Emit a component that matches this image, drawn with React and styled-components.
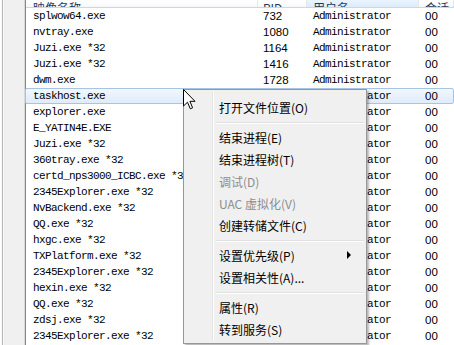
import React from 'react';
import styled, { createGlobalStyle } from 'styled-components';

const GlobalStyle = createGlobalStyle`
  html, body {
    margin: 0;
    padding: 0;
    background: #ffffff;
    overflow: hidden;
  }
`;

const Window = styled.div`
  position: relative;
  width: 454px;
  height: 345px;
  display: flex;
  overflow: hidden;
  background: #ffffff;
`;

const Frame = styled.div`
  width: 22px;
  flex: none;
  margin-left: 1px;
  background: #f0f0f0;
  border-left: 1px solid #f7f7f7;
  border-right: 1px solid #d9d9d9;
  box-shadow: inset 1px 0 0 #b9b9b9, inset 2px 0 0 #f7f7f7;
`;

const FrameEdge = styled.div`
  width: 1px;
  flex: none;
  background: #828790;
`;

const ListView = styled.div`
  flex: 1;
  display: flex;
  flex-direction: column;
  min-width: 0;
`;

const cols = '232px 49px 112px 1fr';

const Header = styled.div`
  display: grid;
  grid-template-columns: ${cols};
  height: 7px;
  border-bottom: 1px solid #d5d5d5;
  overflow: hidden;
  flex: none;
`;

const HeadCell = styled.div`
  display: flex;
  align-items: flex-end;
  padding-left: ${p => p.$pad || 7}px;
  border-right: 1px solid #e3e8ee;
  background: ${p => (p.$sorted ? 'linear-gradient(#eaf4fd, #dcecfb)' : 'linear-gradient(#ffffff, #f7f8fa)')};
  font-family: "Noto Sans CJK SC", "Liberation Sans", sans-serif;
  font-size: 12px;
  line-height: 13px;
  color: #1e395b;
  white-space: nowrap;
  overflow: hidden;
  & > span {
    margin-bottom: -7px;
  }
`;

const Rows = styled.div`
  display: flex;
  flex-direction: column;
`;

const Row = styled.div`
  display: grid;
  grid-template-columns: ${cols};
  height: 16px;
  box-sizing: border-box;
  align-items: center;
  border: 1px solid ${p => (p.$selected ? '#a8c4e4' : 'transparent')};
  border-radius: 2px;
  background: ${p => (p.$selected ? 'linear-gradient(#f1f7fe, #dfecfb)' : 'transparent')};
  margin-left: -1px;
`;

const MonoCell = styled.div`
  padding-left: ${p => p.$pad || 6}px;
  font-family: "Liberation Mono", "DejaVu Sans Mono", monospace;
  font-size: 11px;
  letter-spacing: -0.6px;
  color: #000;
  white-space: nowrap;
  overflow: hidden;
`;

const NumCell = styled.div`
  padding-left: ${p => p.$pad || 5}px;
  font-family: "Liberation Sans", Arial, sans-serif;
  font-size: 11.5px;
  color: #000;
  white-space: nowrap;
`;

const Menu = styled.div`
  position: absolute;
  left: 183px;
  top: 89px;
  width: 178px;
  padding: 6px 2px 3px 2px;
  border: 1px solid #979797;
  background: #f0f0f0;
  box-shadow: 2px 2px 2px rgba(0, 0, 0, 0.28);
  display: flex;
  flex-direction: column;
  &::before {
    content: '';
    position: absolute;
    top: 2px;
    bottom: 2px;
    left: 28px;
    width: 1px;
    background: #e2e3e3;
    box-shadow: 1px 0 0 #ffffff;
  }
`;

const Item = styled.div`
  position: relative;
  height: 22px;
  display: flex;
  align-items: center;
  padding-left: 33px;
  font-family: "Noto Sans CJK SC", "Liberation Sans", sans-serif;
  font-size: 12px;
  color: ${p => (p.$disabled ? '#8d8d8d' : '#000')};
`;

const Arrow = styled.span`
  position: absolute;
  right: 13px;
  top: 7px;
  width: 0;
  height: 0;
  border-top: 4px solid transparent;
  border-bottom: 4px solid transparent;
  border-left: 4px solid #000;
`;

const Separator = styled.div`
  height: 8px;
  display: flex;
  align-items: center;
  padding-left: 30px;
  &::after {
    content: '';
    flex: 1;
    height: 1px;
    background: #e0e0e0;
    box-shadow: 0 1px 0 #ffffff;
  }
`;

const Cursor = styled.svg`
  position: absolute;
  left: 183px;
  top: 89px;
`;

const processes = [
  ['splwow64.exe', '732'],
  ['nvtray.exe', '1080'],
  ['Juzi.exe *32', '1164'],
  ['Juzi.exe *32', '1416'],
  ['dwm.exe', '1728'],
  ['taskhost.exe', '1784', true],
  ['explorer.exe', '1812'],
  ['E_YATIN4E.EXE', '1904'],
  ['Juzi.exe *32', '2000'],
  ['360tray.exe *32', '2084'],
  ['certd_nps3000_ICBC.exe *32', '2124'],
  ['2345Explorer.exe *32', '2200'],
  ['NvBackend.exe *32', '2356'],
  ['QQ.exe *32', '2420'],
  ['hxgc.exe *32', '2496'],
  ['TXPlatform.exe *32', '2572'],
  ['2345Explorer.exe *32', '2640'],
  ['hexin.exe *32', '2712'],
  ['QQ.exe *32', '2788'],
  ['zdsj.exe *32', '2860'],
  ['2345Explorer.exe *32', '2932'],
];

const menu = [
  { label: '打开文件位置(O)' },
  { sep: true },
  { label: '结束进程(E)' },
  { label: '结束进程树(T)' },
  { label: '调试(D)', disabled: true },
  { label: 'UAC 虚拟化(V)', disabled: true },
  { label: '创建转储文件(C)' },
  { sep: true },
  { label: '设置优先级(P)', sub: true },
  { label: '设置相关性(A)...' },
  { sep: true },
  { label: '属性(R)' },
  { label: '转到服务(S)' },
];

const App = () => {
  return (
    <Window>
      <GlobalStyle />
      <Frame />
      <FrameEdge />
      <ListView>
        <Header>
          <HeadCell><span>映像名称</span></HeadCell>
          <HeadCell $pad={5}><span>PID</span></HeadCell>
          <HeadCell $pad={6} $sorted><span>用户名</span></HeadCell>
          <HeadCell $pad={6}><span>会话</span></HeadCell>
        </Header>
        <Rows>
          {processes.map(([name, pid, selected], i) => (
            <Row key={i} $selected={selected}>
              <MonoCell $pad={7}>{name}</MonoCell>
              <NumCell $pad={5}>{pid}</NumCell>
              <MonoCell $pad={6}>Administrator</MonoCell>
              <NumCell $pad={6}>00</NumCell>
            </Row>
          ))}
        </Rows>
      </ListView>

      <Menu>
        {menu.map((m, i) =>
          m.sep ? (
            <Separator key={i} />
          ) : (
            <Item key={i} $disabled={m.disabled}>
              {m.label}
              {m.sub && <Arrow />}
            </Item>
          )
        )}
      </Menu>

      <Cursor width="13" height="22" viewBox="0 0 13 22">
        <path
          d="M0.5 0.5 L0.5 17 L4.5 13.2 L7.3 19.8 L9.6 18.8 L6.9 12.3 L12 12.3 Z"
          fill="#ffffff"
          stroke="#000000"
          strokeWidth="1"
          strokeLinejoin="miter"
        />
      </Cursor>
    </Window>
  );
};

export default App;
